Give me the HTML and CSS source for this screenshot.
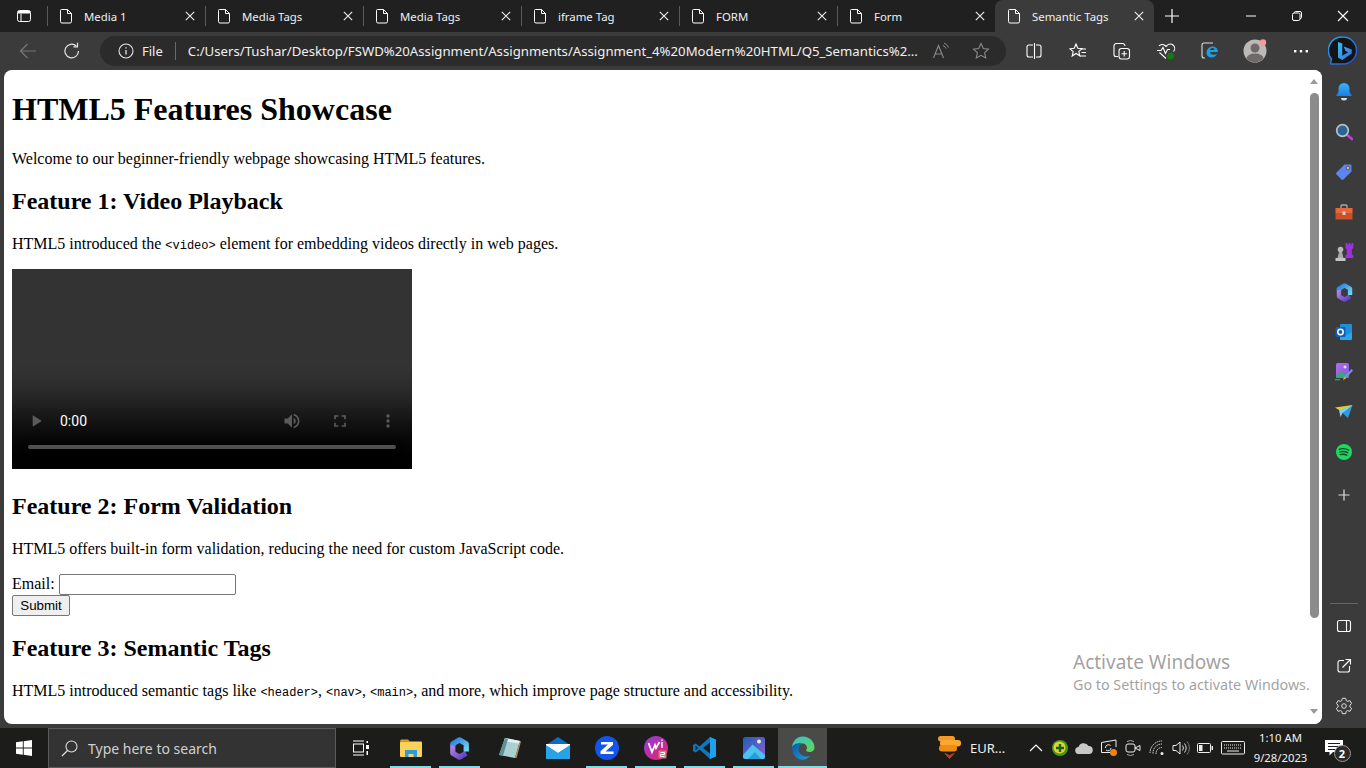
FILE: index.html
```html
<!DOCTYPE html>
<html lang="en">
<head>
    <meta charset="UTF-8">
    <title>Semantic Tags</title>
    <link rel="stylesheet" href="styles.css">
</head>
<body>
<svg class="sprite">
    <symbol id="page-doc" viewBox="0 0 14 16"><path d="M2.500 1.500h6l4 4v8a1.500 1.500 0 0 1-1.500 1.500H3A1.500 1.500 0 0 1 1.500 13.500V2.500a1 1 0 0 1 1-1zM8.500 1.500v4h4" fill="none" stroke="#fff"/></symbol>
    <symbol id="close-x" viewBox="0 0 10 10"><path d="M.8.8l8.400 8.400M9.200.8L.8 9.200" stroke="#f0f0f0" stroke-width="1.100"/></symbol>
</svg>
<div class="browser">
    <!-- Tab strip -->
    <div class="tabstrip">
        <div class="tab-actions">
            <svg class="ic" width="16" height="16" viewBox="0 0 16 16"><rect x="1.500" y="2.500" width="13" height="11" rx="2" fill="none" stroke="#fff"/><path d="M5 5.500v8" stroke="#fff" fill="none"/><path d="M2 3h12v2.500H2z" fill="#fff"/></svg>
        </div>
        <div class="tab">
            <svg class="page-ic" width="14" height="16"><use href="#page-doc"/></svg>
            <span class="tab-title">Media 1</span><svg class="tab-x" width="10" height="10"><use href="#close-x"/></svg>
        </div>
        <div class="tab">
            <svg class="page-ic" width="14" height="16"><use href="#page-doc"/></svg>
            <span class="tab-title">Media Tags</span><svg class="tab-x" width="10" height="10"><use href="#close-x"/></svg>
        </div>
        <div class="tab">
            <svg class="page-ic" width="14" height="16"><use href="#page-doc"/></svg>
            <span class="tab-title">Media Tags</span><svg class="tab-x" width="10" height="10"><use href="#close-x"/></svg>
        </div>
        <div class="tab">
            <svg class="page-ic" width="14" height="16"><use href="#page-doc"/></svg>
            <span class="tab-title">iframe Tag</span><svg class="tab-x" width="10" height="10"><use href="#close-x"/></svg>
        </div>
        <div class="tab">
            <svg class="page-ic" width="14" height="16"><use href="#page-doc"/></svg>
            <span class="tab-title">FORM</span><svg class="tab-x" width="10" height="10"><use href="#close-x"/></svg>
        </div>
        <div class="tab">
            <svg class="page-ic" width="14" height="16"><use href="#page-doc"/></svg>
            <span class="tab-title">Form</span><svg class="tab-x" width="10" height="10"><use href="#close-x"/></svg>
        </div>
        <div class="tab tab-active">
            <svg class="page-ic" width="14" height="16"><use href="#page-doc"/></svg>
            <span class="tab-title">Semantic Tags</span><svg class="tab-x" width="10" height="10"><use href="#close-x"/></svg>
        </div>
        <div class="new-tab">
            <svg width="16" height="16" viewBox="0 0 16 16"><path d="M8 1v14M1 8h14" stroke="#fff" stroke-width="1.200"/></svg>
        </div>
        <div class="win-controls">
            <div class="win-btn"><svg width="12" height="12" viewBox="0 0 12 12"><path d="M1 6h10" stroke="#fff"/></svg></div>
            <div class="win-btn"><svg width="12" height="12" viewBox="0 0 12 12"><rect x="1.500" y="3" width="7.500" height="7.500" rx="1.500" fill="none" stroke="#fff"/><path d="M3.500 3V2.500a1 1 0 0 1 1-1H9A1.500 1.500 0 0 1 10.500 3v4.500a1 1 0 0 1-1 1H9" fill="none" stroke="#fff"/></svg></div>
            <div class="win-btn"><svg width="12" height="12" viewBox="0 0 12 12"><path d="M1 1l10 10M11 1L1 11" stroke="#fff" stroke-width="1.100"/></svg></div>
        </div>
    </div>

    <!-- Toolbar -->
    <div class="toolbar">
        <div class="nav-btn"><svg width="18" height="18" viewBox="0 0 18 18"><path d="M17 9H1.500M8.500 2L1.500 9l7 7" fill="none" stroke="#777" stroke-width="1.200"/></svg></div>
        <div class="nav-btn"><svg width="18" height="18" viewBox="0 0 18 18"><path d="M15.500 9a6.800 6.800 0 1 1-2.200-5" fill="none" stroke="#e6e6e6" stroke-width="1.200"/><path d="M14.500 0.800v4h-4" fill="none" stroke="#e6e6e6" stroke-width="1.200"/></svg></div>
        <div class="address">
            <svg width="16" height="16" viewBox="0 0 16 16"><circle cx="8" cy="8" r="7" fill="none" stroke="#e6e6e6" stroke-width="1.100"/><path d="M8 7v4.500M8 4.300v1.300" stroke="#e6e6e6" stroke-width="1.300"/></svg>
            <span class="addr-file">File</span>
            <span class="addr-sep"></span>
            <span class="addr-url">C:/Users/Tushar/Desktop/FSWD%20Assignment/Assignments/Assignment_4%20Modern%20HTML/Q5_Semantics%2...</span>
            <svg class="addr-read" width="18" height="18" viewBox="0 0 18 18"><path d="M1.500 16L6.500 3.500 11.500 16M3.300 12h6.400" fill="none" stroke="#8a8a8a" stroke-width="1.100"/><path d="M11 3.500a5 5 0 0 1 3 3M12 1a8 8 0 0 1 4.500 4.500" fill="none" stroke="#8a8a8a"/></svg>
            <svg class="addr-star" width="18" height="18" viewBox="0 0 18 18"><path d="M9 1.500l2.300 5 5.200.6-3.900 3.600 1.100 5.300L9 13.300 4.300 16l1.100-5.300L1.500 7.100l5.200-.6z" fill="none" stroke="#8a8a8a" stroke-width="1.100"/></svg>
        </div>
        <div class="tool-icons">
            <div class="tool-btn"><svg width="18" height="18" viewBox="0 0 18 18"><path d="M8 3H4a2 2 0 0 0-2 2v8a2 2 0 0 0 2 2h4M11 3h3a2 2 0 0 1 2 2v8a2 2 0 0 1-2 2h-3M9.500 1v16" fill="none" stroke="#fff" stroke-width="1.100"/></svg></div>
            <div class="tool-btn"><svg width="18" height="18" viewBox="0 0 18 18"><path d="M7 2l1.800 4.200 4.200.4-3.200 2.800 1 4.400L7 11.500 3.200 14l1-4.400L1 6.800l4.200-.6z" fill="none" stroke="#fff" stroke-width="1.100"/><path d="M12 7h5M12.500 10.500h4.500M11 14h6" stroke="#fff" stroke-width="1.100"/></svg></div>
            <div class="tool-btn"><svg width="18" height="18" viewBox="0 0 18 18"><path d="M5 14.500H3a2 2 0 0 1-2-2V4a2.500 2.500 0 0 1 2.500-2.500H10A2.500 2.500 0 0 1 12 4" fill="none" stroke="#fff" stroke-width="1.100"/><rect x="6" y="6.500" width="10.500" height="10.500" rx="2.500" fill="none" stroke="#fff" stroke-width="1.100"/><path d="M11.200 9v5.500M8.500 11.700h5.500" stroke="#fff" stroke-width="1.100"/></svg></div>
            <div class="tool-btn"><svg width="20" height="20" viewBox="0 0 20 20"><path d="M10 17.500L3.500 11.500M3 5a4.200 4.200 0 0 1 6-.5l1 1 1-1a4.200 4.200 0 0 1 6.500 6" fill="none" stroke="#fff" stroke-width="1.100"/><path d="M1 9.500h4l2-3 2.500 6 2-4h2.500" fill="none" stroke="#fff" stroke-width="1.100"/><circle cx="14.500" cy="15" r="3.500" fill="#107c10"/></svg></div>
            <div class="tool-btn"><svg width="20" height="20" viewBox="0 0 20 20"><path d="M13 2H4a2 2 0 0 0-2 2v11a2 2 0 0 0 2 2h1" fill="none" stroke="#ddd" stroke-width="1.100"/><path d="M6.500 12c0-4 3-6.500 6-6.500 3.500 0 5.500 2.500 5.500 5.500H10c0 2.500 3.500 3.500 7 2-1 2.500-3.500 3.500-5.500 3.500-3 0-5-2-5-4.500zM10 9h4.500c0-1.500-1-2-2.200-2-1.200 0-2 .8-2.300 2z" fill="#1ba1e2" fill-rule="evenodd"/></svg></div>
            <div class="tool-btn tool-wide">
                <svg width="24" height="24" viewBox="0 0 24 24"><circle cx="12" cy="12" r="11.500" fill="#bdb9b6"/><circle cx="12" cy="9" r="4.500" fill="#6d6b69"/><path d="M3.500 19.500a8.500 5 0 0 1 17 0A11.500 11.500 0 0 1 3.500 19.500z" fill="#6d6b69"/><circle cx="20" cy="3.500" r="3.200" fill="#f59a9a"/></svg>
            </div>
            <div class="tool-btn tool-wide"><svg width="16" height="4" viewBox="0 0 16 4"><rect x="1" y="1" width="2.400" height="2.400" fill="#fff"/><rect x="6.800" y="1" width="2.400" height="2.400" fill="#fff"/><rect x="12.600" y="1" width="2.400" height="2.400" fill="#fff"/></svg></div>
        </div>
        <div class="bing-btn">
            <svg width="30" height="30" viewBox="0 0 30 30"><defs><linearGradient id="bingRing" x1="0" y1="0" x2="1" y2="1"><stop offset="0" stop-color="#2aa7e8"/><stop offset="1" stop-color="#2848d8"/></linearGradient><linearGradient id="bingB" x1="0" y1="0" x2="1" y2="1"><stop offset="0" stop-color="#35c1f1"/><stop offset="1" stop-color="#3a6be8"/></linearGradient></defs><path d="M15 1a13.500 13.500 0 0 1 0 27H3.500a1 1 0 0 1-.8-1.500L3.500 23A13.500 13.500 0 0 1 15 1z" fill="#141414" stroke="url(#bingRing)" stroke-width="1.500"/><path d="M10 6l4.300 1.500v12.200l6-3.500-2.800-1.300-1.800-4.300 8 2.800v4.100L14.300 24 10 21.500z" fill="url(#bingB)"/></svg>
        </div>
    </div>

    <div class="main">
        <div class="viewport">
            <!-- The page that is being viewed -->
            <div class="page">
                <h1>HTML5 Features Showcase</h1>
                <p>Welcome to our beginner-friendly webpage showcasing HTML5 features.</p>

                <h2>Feature 1: Video Playback</h2>
                <p>HTML5 introduced the <code>&lt;video&gt;</code> element for embedding videos directly in web pages.</p>
                <video class="demo-video" width="400" height="200" controls></video>

                <h2>Feature 2: Form Validation</h2>
                <p>HTML5 offers built-in form validation, reducing the need for custom JavaScript code.</p>
                <form>
                    <label for="email">Email:</label>
                    <input class="email-input" type="email" id="email"><br>
                    <button class="submit-btn" type="button">Submit</button>
                </form>

                <h2>Feature 3: Semantic Tags</h2>
                <p>HTML5 introduced semantic tags like <code>&lt;header&gt;</code>, <code>&lt;nav&gt;</code>, <code>&lt;main&gt;</code>, and more, which improve page structure and accessibility.</p>
            </div>
            <div class="scrollbar">
                <span class="arrow-up"></span>
                <div class="thumb"></div>
                <span class="arrow-down"></span>
            </div>
            <div class="activate">
                <div class="activate-title">Activate Windows</div>
                <div class="activate-sub">Go to Settings to activate Windows.</div>
            </div>
        </div>

        <!-- Edge sidebar -->
        <div class="sidebar">
            <div class="side-btn"><svg width="18" height="20" viewBox="0 0 18 20"><defs><linearGradient id="bell" x1="0" y1="0" x2="0" y2="1"><stop offset="0" stop-color="#3ab4f5"/><stop offset="1" stop-color="#1a7fe8"/></linearGradient></defs><path d="M9 1a5.500 5.500 0 0 1 5.500 5.500V10l2.500 4H1l2.500-4V6.500A5.500 5.500 0 0 1 9 1z" fill="url(#bell)"/><path d="M6 16h6a3 2.500 0 0 1-6 0z" fill="#cfe4f5"/></svg></div>
            <div class="side-btn"><svg width="18" height="18" viewBox="0 0 18 18"><path d="M11 11l6 5" stroke="#c23fd8" stroke-width="2.600" stroke-linecap="round"/><circle cx="7.500" cy="7.500" r="5.800" fill="#2c6390" stroke="#b9c2c8" stroke-width="1.700"/></svg></div>
            <div class="side-btn"><svg width="18" height="18" viewBox="0 0 18 18"><path d="M9.500 1.500h6a1 1 0 0 1 1 1v6L8.500 16.500a1.500 1.500 0 0 1-2 0l-5-5a1.500 1.500 0 0 1 0-2z" fill="#5a86ee"/><circle cx="13" cy="5" r="1.800" fill="#f0c419" stroke="#4b3ab0" stroke-width=".8"/></svg></div>
            <div class="side-btn"><svg width="18" height="16" viewBox="0 0 18 16"><path d="M6 4V2a1 1 0 0 1 1-1h4a1 1 0 0 1 1 1v2" fill="none" stroke="#b0a8a0" stroke-width="1.300"/><rect x="0.500" y="4" width="17" height="5" fill="#e8663a"/><rect x="0.500" y="9" width="17" height="6.500" fill="#c8502a"/><rect x="7.500" y="7.500" width="3" height="3.500" fill="#d8d0c8"/></svg></div>
            <div class="side-btn"><svg width="20" height="20" viewBox="0 0 20 20"><circle cx="6.500" cy="7.500" r="2.800" fill="#b8b8b8"/><path d="M5 10h3l1.500 6h-6z" fill="#a8a8a8"/><rect x="1.500" y="16" width="10" height="3" fill="#c4c4c4"/><path d="M11.500 1h1.800v1.500h1.400V1h1.600v1.500h1.400V1h1.600v5l-1.500 1.500v5l1.500 1V16h-8v-2.500l1.500-1v-5L11.500 6z" fill="#a22ee0"/></svg></div>
            <div class="side-btn"><svg width="19" height="19" viewBox="0 0 24 24"><defs><linearGradient id="m1" x1="0" y1="0" x2="1" y2="1"><stop offset="0" stop-color="#2b7fe3"/><stop offset="1" stop-color="#6fd8f0"/></linearGradient><linearGradient id="m2" x1="0" y1="0" x2="1" y2="1"><stop offset="0" stop-color="#b58be4"/><stop offset="1" stop-color="#5a3cc0"/></linearGradient></defs><path d="M5 7v10l7 4 7-4" fill="none" stroke="url(#m2)" stroke-width="5.500" stroke-linejoin="round"/><path d="M5 9V7l7-4 7 4v8" fill="none" stroke="url(#m1)" stroke-width="5.500" stroke-linejoin="round"/></svg></div>
            <div class="side-btn"><svg width="18" height="18" viewBox="0 0 18 18"><rect x="5" y="1" width="12" height="15" rx="1" fill="#1f8fd8"/><path d="M5 9l6 3.500L17 9v7a1 1 0 0 1-1 1H6a1 1 0 0 1-1-1z" fill="#28a8ea"/><rect x="0.500" y="4" width="10" height="10" rx="1" fill="#0f5fb8"/><circle cx="5.500" cy="9" r="2.700" fill="none" stroke="#fff" stroke-width="1.500"/></svg></div>
            <div class="side-btn"><svg width="20" height="20" viewBox="0 0 20 20"><defs><linearGradient id="dz" x1="0" y1="0" x2="1" y2="1"><stop offset="0" stop-color="#b36be8"/><stop offset="1" stop-color="#7c5ce0"/></linearGradient></defs><rect x="2" y="1" width="13" height="15" rx="1.500" fill="url(#dz)"/><path d="M2 14l4.500-5 4 3 4-1v5H2z" fill="#38a87a"/><path d="M11 3.500v3M9.500 5h3" stroke="#fff"/><path d="M10 15l7.500-8 1.500 1.500-7.500 8z" fill="#7f8fd8"/><path d="M9 18l1-3 2 1.500z" fill="#e8b830"/><path d="M1 18c2-1.500 3 .8 5-.5" fill="none" stroke="#38a87a" stroke-width="1.200"/></svg></div>
            <div class="side-btn"><svg width="18" height="16" viewBox="0 0 18 16"><path d="M0 3.500L17.500 1 11 8 4 6z" fill="#f5c518"/><path d="M17.500 1L13 14 7.500 9z" fill="#2b9be0"/><path d="M4 6l1.500 7L7.500 9 17.500 1z" fill="#7fd0f0"/></svg></div>
            <div class="side-btn"><svg width="18" height="18" viewBox="0 0 18 18"><circle cx="9" cy="9" r="8" fill="#1ed760"/><path d="M4.200 6.300c3-1 6.500-.8 9.500.8M4.700 9c2.600-.8 5.500-.6 8 .7M5.200 11.600c2.200-.6 4.500-.4 6.600.6" fill="none" stroke="#14432a" stroke-width="1.300" stroke-linecap="round"/></svg></div>
            <div class="side-btn side-add"><svg width="14" height="14" viewBox="0 0 14 14"><path d="M7 1.500v11M1.500 7h11" stroke="#ddd" stroke-width="1.200"/></svg></div>
            <div class="side-spacer"></div>
            <div class="side-rule"></div>
            <div class="side-btn"><svg width="16" height="14" viewBox="0 0 16 14"><rect x="1.500" y="1.500" width="13" height="11" rx="2" fill="none" stroke="#fff" stroke-width="1.100"/><path d="M10.500 1.500v11" stroke="#fff" stroke-width="1.100"/></svg></div>
            <div class="side-btn"><svg width="16" height="16" viewBox="0 0 16 16"><path d="M8 2.500H4a2 2 0 0 0-2 2V12a2 2 0 0 0 2 2h7.500a2 2 0 0 0 2-2V8" fill="none" stroke="#fff" stroke-width="1.100"/><path d="M6.500 9.500L14.500 1.500M9.500 1.500h5v5" fill="none" stroke="#fff" stroke-width="1.100"/></svg></div>
            <div class="side-btn"><svg width="18" height="18" viewBox="0 0 18 18"><path d="M7.300 1.300h3.400l.5 2.300 1.500.8 2.200-.8 1.700 3-1.700 1.500v1.800l1.700 1.500-1.700 3-2.200-.8-1.500.8-.5 2.300H7.300l-.5-2.300-1.500-.8-2.200.8-1.700-3 1.700-1.500V8.100L1.400 6.600l1.700-3 2.200.8 1.500-.8z" fill="none" stroke="#ddd" stroke-linejoin="round"/><circle cx="9" cy="9" r="2.300" fill="none" stroke="#ddd"/></svg></div>
        </div>
    </div>

    <!-- Windows taskbar -->
    <div class="taskbar">
        <div class="start"><svg width="16" height="16" viewBox="0 0 16 16"><path d="M0 2.300L6.800 1.300v6.300H0zM7.700 1.200L16 0v7.600H7.700zM0 8.400h6.800v6.300L0 13.700zM7.700 8.400H16V16l-8.300-1.200z" fill="#fff"/></svg></div>
        <div class="search">
            <svg width="17" height="17" viewBox="0 0 17 17"><circle cx="10.500" cy="6.500" r="5.500" fill="none" stroke="#ddd" stroke-width="1.100"/><path d="M6.500 10.500L1 16" stroke="#ddd" stroke-width="1.200"/></svg>
            <span class="search-text">Type here to search</span>
        </div>
        <div class="task-view"><svg width="16" height="16" viewBox="0 0 16 16"><path d="M0 1h11M0 15h11" stroke="#fff"/><rect x="0.500" y="4" width="10" height="8" fill="none" stroke="#fff"/><rect x="13.500" y="1" width="1.500" height="2" fill="#fff"/><rect x="13" y="5" width="3" height="4" fill="#fff"/><rect x="13.500" y="11" width="1.500" height="4" fill="#fff"/></svg></div>
        <div class="task-apps">
            <div class="app running"><svg width="22" height="20" viewBox="0 0 22 20"><path d="M0 3a1.500 1.500 0 0 1 1.500-1.500H8L10 3.500h-10z" fill="#d8a020"/><rect y="3.500" width="22" height="15.500" rx="1" fill="#fbd25c"/><path d="M5 19v-7h12v7h-3.500v-3h-5v3z" fill="#2b9be0"/></svg></div>
            <div class="app running"><svg width="23" height="23" viewBox="0 0 24 24"><path d="M5 7v10l7 4 7-4" fill="none" stroke="url(#m2)" stroke-width="5.500" stroke-linejoin="round"/><path d="M5 9V7l7-4 7 4v8" fill="none" stroke="url(#m1)" stroke-width="5.500" stroke-linejoin="round"/></svg></div>
            <div class="app"><svg width="24" height="24" viewBox="0 0 24 24"><path d="M8 2l15 3-5 17-16-3z" fill="#a9d0d4"/><path d="M8 2l15 3-.8 2.500L7 5z" fill="#e6efef"/><path d="M2 19L8 2l3 1-5 16.500z" fill="#5f8f96"/><path d="M18 22l5-17 1 .5L19.500 22z" fill="#b8935c"/></svg></div>
            <div class="app"><svg width="24" height="22" viewBox="0 0 24 22"><path d="M12 0l12 8v1H0V8z" fill="#0a6fc0"/><rect y="8" width="24" height="14" fill="#33b1ee"/><path d="M0 8l12 8 12-8v-1H0z" fill="#fff"/><path d="M0 8.500L12 16l12-7.500V22H0z" fill="#28a3e5"/></svg></div>
            <div class="app running"><svg width="24" height="24" viewBox="0 0 24 24"><circle cx="12" cy="12" r="12" fill="#1454e8"/><path d="M6 6h12v2.800L10.500 15.500H18.500V18H5.500v-2.800L13 8.500H6z" fill="#fff"/></svg></div>
            <div class="app running"><svg width="24" height="24" viewBox="0 0 24 24"><defs><linearGradient id="wv" x1="0" y1="0" x2="1" y2="1"><stop offset="0" stop-color="#8a3fe0"/><stop offset="1" stop-color="#f02060"/></linearGradient></defs><circle cx="12" cy="12" r="12" fill="url(#wv)"/><path d="M4.500 7l3.500 9 3-7 1 3 3.500-6" fill="none" stroke="#fff" stroke-width="1.800"/><path d="M18 6v6M18 3.500v1.200" stroke="#fff" stroke-width="1.500"/><rect x="14.500" y="14.500" width="8" height="8" rx="1" fill="#f07070"/><path d="M16.500 16.500h4v2h-4v2h4" fill="none" stroke="#fff" stroke-width="1"/></svg></div>
            <div class="app running"><svg width="24" height="24" viewBox="0 0 24 24"><path d="M17 1l6 2.800v16.400L17 23 6.500 13.500 2.500 16.500 0 15V9l2.500-1.500 4 3z" fill="#0c78c0"/><path d="M17 1l6 2.800v16.400L17 23z" fill="#1ea1ee"/><path d="M17 6.500L10 12l7 5.500z" fill="#1c1c1a"/><path d="M2.500 9.500L5 12l-2.500 2.500z" fill="#1c1c1a"/></svg></div>
            <div class="app running"><svg width="22" height="22" viewBox="0 0 22 22"><defs><linearGradient id="ph" x1="0" y1="0" x2="1" y2="1"><stop offset="0" stop-color="#1f5fb8"/><stop offset="1" stop-color="#9060d0"/></linearGradient></defs><rect width="22" height="22" rx="2.500" fill="url(#ph)"/><circle cx="16" cy="4.500" r="2" fill="#e8eef8"/><path d="M0 18l9.500-10.500L22 18v1.500a2.500 2.500 0 0 1-2.500 2.500h-17A2.500 2.500 0 0 1 0 19.500z" fill="#4cc2f0"/><path d="M5 22l7-7 6 7z" fill="#2b9be0"/></svg></div>
            <div class="app running app-active"><svg width="24" height="24" viewBox="0 0 24 24"><defs><linearGradient id="eg1" x1="0" y1="0" x2="1" y2="1"><stop offset="0" stop-color="#36c1d8"/><stop offset="1" stop-color="#62d84e"/></linearGradient><linearGradient id="eg2" x1="0" y1="0" x2="1" y2="1"><stop offset="0" stop-color="#0c59a4"/><stop offset="1" stop-color="#1b9de2"/></linearGradient></defs><path d="M1 11.500C1.500 5 6 .5 12 .5c6.500 0 11.500 5 11.500 11 0 3-2.500 4.500-5 4.500-2 0-3.500-1-3.500-2 2-1.500 1-6-3-6.500C7 7 2.500 8 1 11.500z" fill="url(#eg1)"/><path d="M1 11.500C2.500 7.500 7 6.500 12 7.500c-3 .8-4.500 3-4.500 5.500 0 4 3.500 7.500 8 7.500 1.500 0 2.500-.3 3.500-.8-2 2.500-4.500 4-7.500 4-6 0-10.500-5.500-10.500-12.200z" fill="url(#eg2)"/></svg></div>
        </div>
        <div class="task-gap"></div>
        <div class="stocks">
            <svg width="24" height="26" viewBox="0 0 24 26"><rect x="1" y="1" width="17" height="5.500" rx="2.700" fill="#f59a23"/><rect x="3" y="5" width="21" height="6.500" rx="3" fill="#f9a92e"/><rect x="2" y="10" width="18" height="6.500" rx="3" fill="#ee8c14"/><path d="M8 18.500l4.500 5 4.500-5-4.500 2z" fill="#c43e1c" stroke="#c43e1c"/></svg>
            <span class="stocks-text">EUR...</span>
        </div>
        <div class="tray">
            <div class="tray-ic"><svg width="14" height="8" viewBox="0 0 14 8"><path d="M1 7l6-6 6 6" fill="none" stroke="#fff" stroke-width="1.200"/></svg></div>
            <div class="tray-ic"><svg width="16" height="16" viewBox="0 0 16 16"><circle cx="8" cy="8" r="8" fill="#3f9a2c"/><circle cx="7.500" cy="7.500" r="6" fill="#e6d31e"/><path d="M8 4v8M4 8h8" stroke="#14602a" stroke-width="2.400"/></svg></div>
            <div class="tray-ic"><svg width="18" height="12" viewBox="0 0 18 12"><path d="M4 12a3.500 3.500 0 0 1-.5-7A5.500 5.500 0 0 1 13.500 4 4 4 0 0 1 14 12z" fill="#c8c8c8"/></svg></div>
            <div class="tray-ic"><svg width="18" height="18" viewBox="0 0 18 18"><path d="M11 13.500H1.500V3.500L16 1v7" fill="none" stroke="#eee"/><path d="M5.500 9a3 3 0 0 1 5-2.500M11 9a3 3 0 0 1-5 2" fill="none" stroke="#eee"/><circle cx="13.500" cy="13.500" r="3.500" fill="#f0850f"/></svg></div>
            <div class="tray-ic"><svg width="16" height="18" viewBox="0 0 16 18"><rect x="1" y="5" width="9" height="8" rx="2" fill="none" stroke="#eee"/><path d="M10 9l5-2.500v5L10 9z" fill="none" stroke="#eee"/><path d="M2 2.500a7 7 0 0 1 7 0M2 15.500a7 7 0 0 0 7 0" fill="none" stroke="#aaa"/></svg></div>
            <div class="tray-ic"><svg width="16" height="16" viewBox="0 0 16 16"><path d="M1 13a12 12 0 0 1 12-12M4 13.500a9 9 0 0 1 9-9.500M7 14a6 6 0 0 1 6-6.500" fill="none" stroke="#ddd" stroke-dasharray="1.500 .7"/><circle cx="13" cy="13.500" r="1.500" fill="#eee"/></svg></div>
            <div class="tray-ic"><svg width="18" height="16" viewBox="0 0 18 16"><path d="M1 5.500h3L8 2v12l-4-3.500H1z" fill="none" stroke="#eee"/><path d="M10.500 5.500a4 4 0 0 1 0 5M12.500 3.500a7 7 0 0 1 0 9" fill="none" stroke="#ddd"/><path d="M15 1.500a10 10 0 0 1 0 13" fill="none" stroke="#777"/></svg></div>
            <div class="tray-ic"><svg width="16" height="10" viewBox="0 0 16 10"><rect x="0.500" y="0.500" width="13" height="9" rx="1" fill="none" stroke="#eee"/><rect x="2" y="2" width="3.500" height="6" fill="#eee"/><rect x="14.500" y="3" width="1.500" height="4" fill="#eee"/></svg></div>
            <div class="tray-ic tray-kb"><svg width="24" height="14" viewBox="0 0 24 14"><rect x="0.500" y="0.500" width="23" height="12.500" rx="1" fill="none" stroke="#eee"/><path d="M3 4h18M3 7h18" stroke="#eee" stroke-dasharray="1 1"/><path d="M6 10h12" stroke="#eee"/></svg></div>
        </div>
        <div class="clock">
            <div>1:10 AM</div>
            <div>9/28/2023</div>
        </div>
        <div class="notif">
            <svg width="18" height="16" viewBox="0 0 18 16"><path d="M0 0h18v12H8l-3.500 3.500V12H0z" fill="#fff"/><path d="M3 3.500h12M3 6.500h12M3 9.500h7" stroke="#1c1c1a"/></svg>
            <span class="notif-badge">2</span>
        </div>
    </div>
</div>
</body>
</html>
```

FILE: styles.css
```css
* {
    box-sizing: border-box;
}

html, body {
    margin: 0;
    padding: 0;
    height: 100%;
    overflow: hidden;
}

.sprite {
    display: none;
}

.browser {
    width: 1366px;
    height: 768px;
    display: flex;
    flex-direction: column;
    background-color: #3b3b3b;
    font-family: 'Noto Sans', 'Open Sans', sans-serif;
    color: #fff;
}

/* Tab strip */
.tabstrip {
    height: 32px;
    display: flex;
    align-items: stretch;
    background-color: #202020;
    flex-shrink: 0;
}

.tab-actions {
    width: 47px;
    display: flex;
    align-items: center;
    justify-content: center;
}

.tab {
    width: 158px;
    display: flex;
    align-items: center;
    padding: 0 10px 0 12px;
    position: relative;
}

.tab::before {
    content: "";
    position: absolute;
    left: 0;
    top: 6px;
    bottom: 6px;
    width: 1px;
    background-color: #5a5a5a;
}

.tab-active {
    background-color: #3b3b3b;
    border-radius: 8px 8px 0 0;
    width: 159px;
}

.tab-active::before {
    display: none;
}

.page-ic {
    flex-shrink: 0;
}

.tab-title {
    margin-left: 11px;
    font-size: 11.400px;
    flex: 1;
    white-space: nowrap;
    color: #f0f0f0;
}

.tab-x {
    flex-shrink: 0;
}

.new-tab {
    width: 36px;
    display: flex;
    align-items: center;
    justify-content: center;
}

.win-controls {
    margin-left: auto;
    display: flex;
}

.win-btn {
    width: 46px;
    display: flex;
    align-items: center;
    justify-content: center;
}

/* Toolbar */
.toolbar {
    height: 38px;
    display: flex;
    align-items: center;
    padding-left: 6px;
    flex-shrink: 0;
}

.nav-btn {
    width: 44px;
    display: flex;
    align-items: center;
    justify-content: center;
}

.address {
    width: 906px;
    height: 30px;
    margin-left: 6px;
    border-radius: 15px;
    background-color: #2b2b2b;
    display: flex;
    align-items: center;
    padding: 0 16px 0 18px;
    font-size: 13px;
}

.addr-file {
    margin-left: 8px;
    color: #f0f0f0;
}

.addr-sep {
    width: 1px;
    height: 18px;
    background-color: #6a6a6a;
    margin: 0 12px;
}

.addr-url {
    flex: 1;
    font-size: 13.200px;
    white-space: nowrap;
    overflow: hidden;
    color: #f0f0f0;
}

.addr-read {
    margin-left: 12px;
}

.addr-star {
    margin-left: 22px;
}

.tool-icons {
    display: flex;
    align-items: center;
    margin-left: 6px;
}

.tool-btn {
    width: 44px;
    height: 30px;
    display: flex;
    align-items: center;
    justify-content: center;
}

.tool-wide {
    width: 46px;
}

.bing-btn {
    width: 36px;
    margin-left: 1px;
    display: flex;
    align-items: center;
    justify-content: center;
}

/* Main area */
.main {
    height: 658px;
    display: flex;
    flex-shrink: 0;
}

.viewport {
    position: relative;
    flex: 1;
    margin: 0 0 4px 4px;
    background-color: #fff;
    color: #000;
    border-radius: 8px;
    overflow: hidden;
    display: flex;
}

.page {
    flex: 1;
    padding: 8px;
    font-family: 'Liberation Serif', serif;
    font-size: 16px;
    overflow: hidden;
}

.page h1 {
    font-size: 32px;
    margin: 13.440px 0 21.440px;
}

.page h2 {
    font-size: 24px;
    margin: 19.920px 0;
}

.page p {
    margin: 16px 0;
}

.page code {
    font-family: 'Liberation Mono', monospace;
    font-size: 12px;
}

.demo-video {
    background-color: #000;
}

.email-input {
    width: 177px;
    height: 21px;
    padding: 1px 2px;
    border: 1px solid #767676;
    border-radius: 2px;
    background-color: #fff;
}

.submit-btn {
    width: 58px;
    height: 21px;
    padding: 1px 6px;
    font-family: 'Liberation Sans', sans-serif;
    font-size: 13.330px;
    color: #000;
    background-color: #efefef;
    border: 1px solid #767676;
    border-radius: 2px;
}

.scrollbar {
    width: 16px;
    flex-shrink: 0;
    display: flex;
    flex-direction: column;
    align-items: center;
    background-color: #fff;
}

.arrow-up {
    margin-top: 9px;
    border-left: 4.500px solid transparent;
    border-right: 4.500px solid transparent;
    border-bottom: 5px solid #9a9a9a;
}

.thumb {
    width: 9px;
    height: 525px;
    margin-top: 9px;
    border-radius: 5px;
    background-color: #8b8b8b;
}

.arrow-down {
    margin-top: auto;
    margin-bottom: 10px;
    border-left: 4.500px solid transparent;
    border-right: 4.500px solid transparent;
    border-top: 5px solid #9a9a9a;
}

.activate {
    position: absolute;
    left: 1069px;
    top: 579px;
    color: rgba(130, 130, 130, 0.75);
    white-space: nowrap;
}

.activate-title {
    font-size: 19px;
    line-height: 26px;
}

.activate-sub {
    font-size: 14.300px;
    line-height: 20px;
}

/* Sidebar */
.sidebar {
    width: 44px;
    flex-shrink: 0;
    padding: 2px 0;
    display: flex;
    flex-direction: column;
    align-items: center;
}

.side-btn {
    width: 44px;
    height: 40px;
    display: flex;
    align-items: center;
    justify-content: center;
}

.side-add {
    margin-top: 3px;
}

.side-spacer {
    flex: 1;
}

.side-rule {
    width: 28px;
    height: 1px;
    margin-bottom: 2px;
    background-color: #666;
}

/* Taskbar */
.taskbar {
    height: 40px;
    display: flex;
    align-items: stretch;
    background-color: #1c1c1a;
    flex-shrink: 0;
}

.start {
    width: 48px;
    display: flex;
    align-items: center;
    justify-content: center;
}

.search {
    width: 288px;
    display: flex;
    align-items: center;
    padding-left: 12px;
    background-color: #333;
    border: 1px solid #5a5a5a;
}

.search-text {
    margin-left: 10px;
    font-size: 14px;
    color: #d0d0d0;
}

.task-view {
    width: 50px;
    display: flex;
    align-items: center;
    justify-content: center;
}

.task-apps {
    display: flex;
}

.app {
    width: 49px;
    display: flex;
    align-items: center;
    justify-content: center;
    position: relative;
}

.app.running::after {
    content: "";
    position: absolute;
    left: 4px;
    right: 4px;
    bottom: 0;
    height: 2px;
    background-color: #7fdce6;
}

.app-active {
    background-color: #4a4a48;
}

.app-active.running::after {
    left: 0;
    right: 0;
}

.task-gap {
    width: 110px;
}

.stocks {
    display: flex;
    align-items: center;
    width: 87px;
}

.stocks-text {
    margin-left: 9px;
    font-size: 13px;
    color: #f0f0f0;
}

.tray {
    display: flex;
    align-items: center;
}

.tray-ic {
    width: 24.200px;
    display: flex;
    align-items: center;
    justify-content: center;
}

.tray-kb {
    width: 30px;
}

.clock {
    width: 66px;
    display: flex;
    flex-direction: column;
    justify-content: center;
    align-items: center;
    font-size: 11.300px;
    line-height: 20px;
    color: #f0f0f0;
}

.notif {
    position: relative;
    flex: 1;
    display: flex;
    align-items: center;
    justify-content: center;
    padding-right: 12px;
}

.notif-badge {
    position: absolute;
    left: 20px;
    top: 17px;
    width: 17px;
    height: 17px;
    border-radius: 50%;
    border: 1px solid #9a9a9a;
    background-color: #2a2a2a;
    font-size: 11px;
    line-height: 15px;
    text-align: center;
    font-weight: 700;
}
```
